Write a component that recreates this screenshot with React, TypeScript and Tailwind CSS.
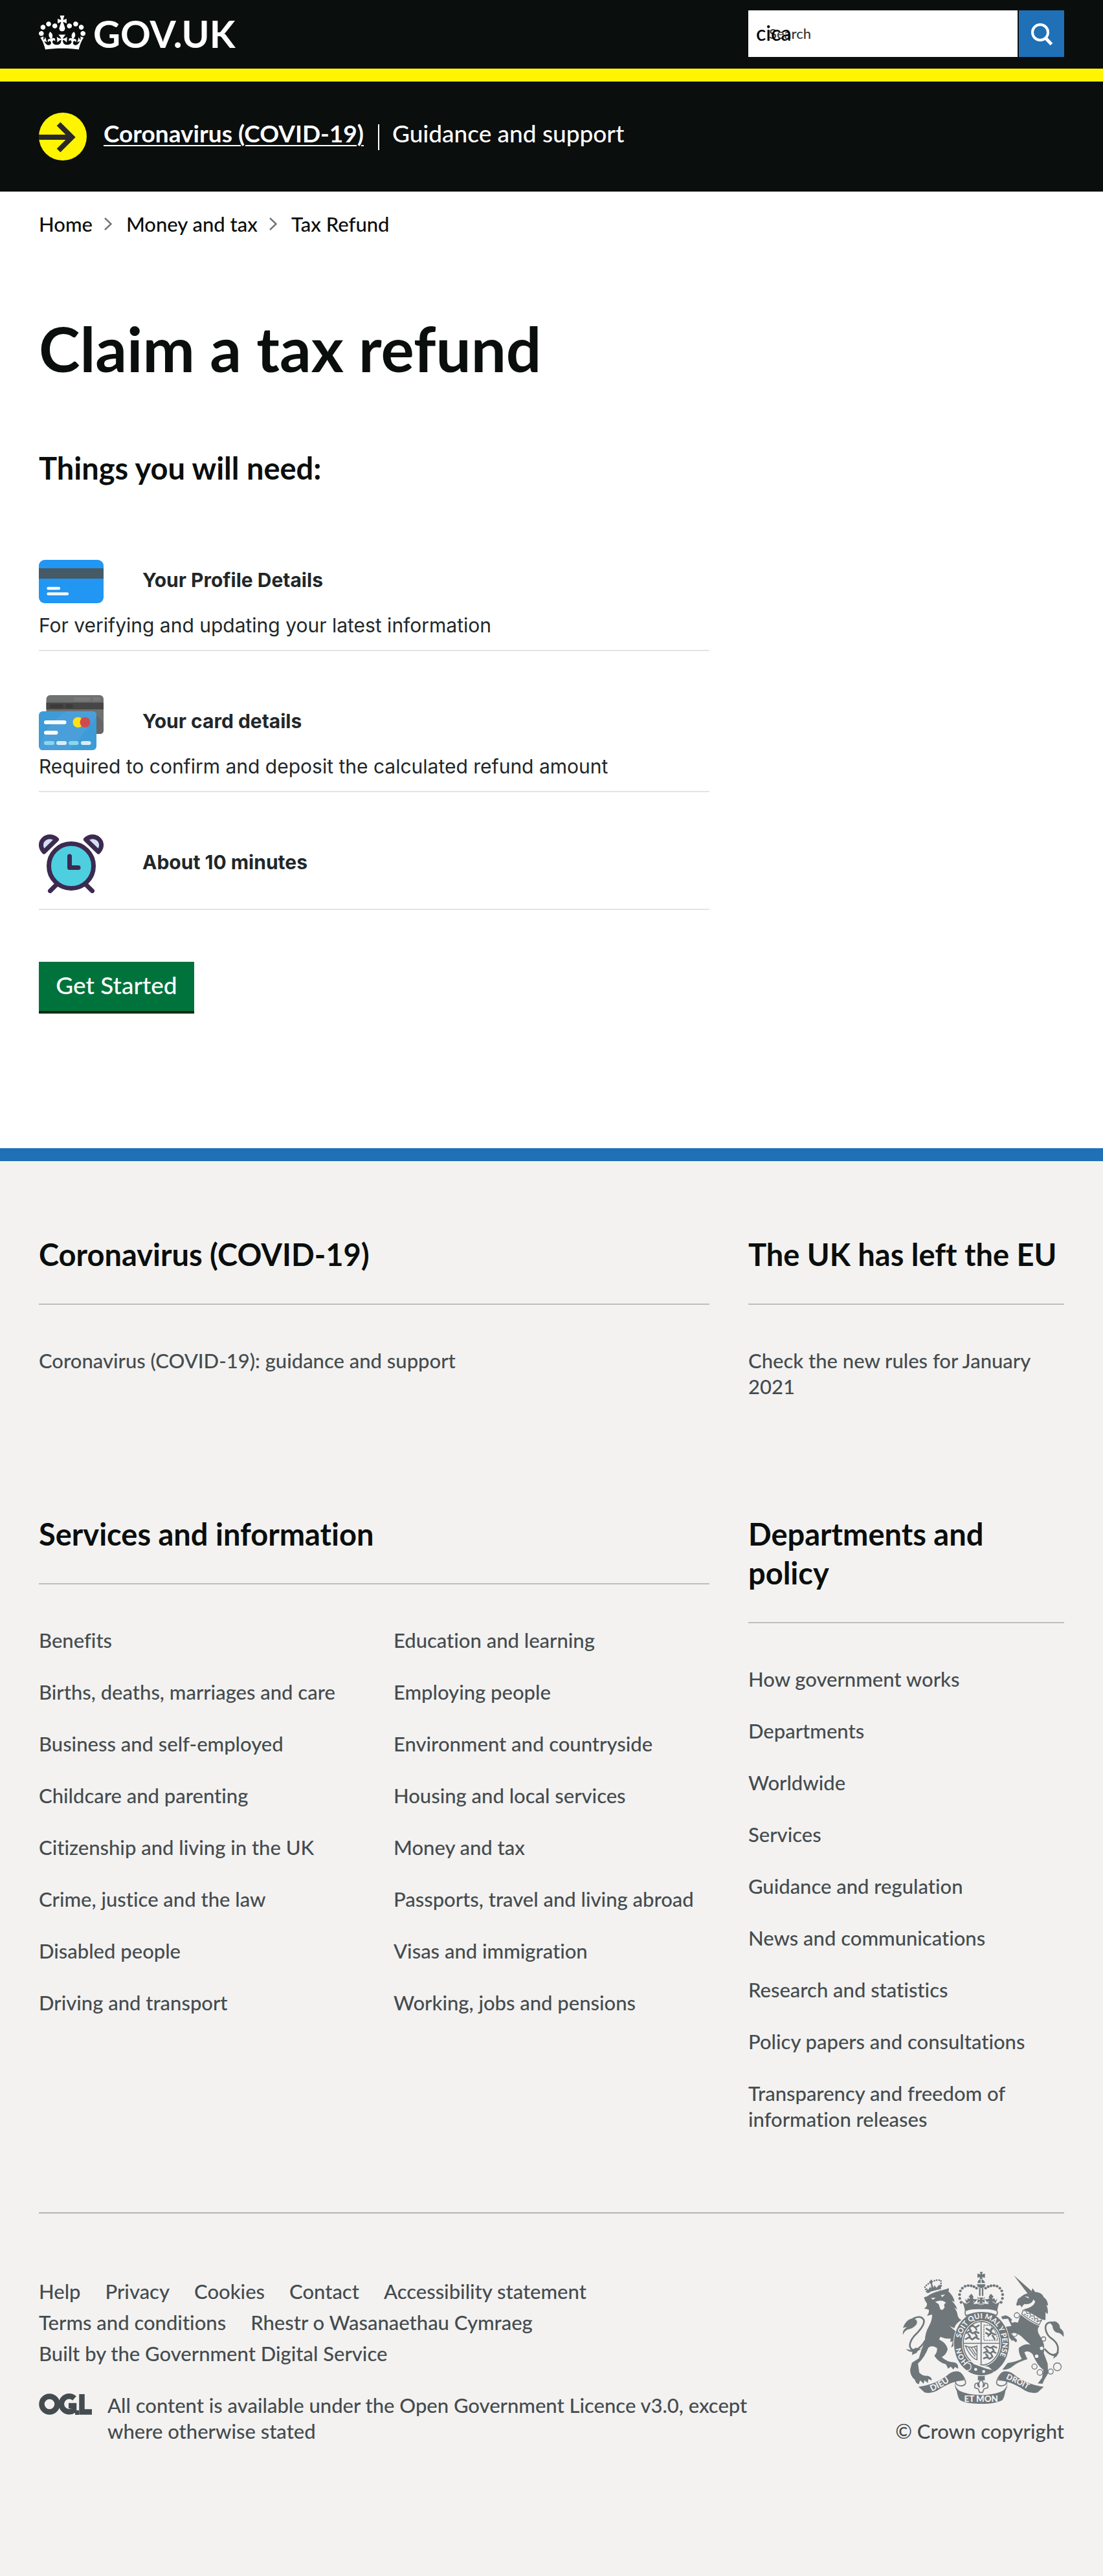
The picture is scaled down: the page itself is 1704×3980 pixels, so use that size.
import React from 'react';

const LATO = "font-['Lato','Liberation_Sans',sans-serif]";
const INTER = "font-['Inter','Liberation_Sans',sans-serif]";

function Crown() {
  return (
    <svg viewBox="0 0 132 97" className="h-[53px] w-[72px]" fill="#fff" aria-hidden="true">
      <path
        fillRule="evenodd"
        d="M25 30.2c3.5 1.5 7.7-.2 9.1-3.7 1.5-3.6-.2-7.8-3.9-9.2-3.6-1.4-7.6.3-9.1 3.9-1.4 3.5.3 7.5 3.9 9zM9 39.5c3.6 1.5 7.8-.2 9.2-3.7 1.5-3.6-.2-7.8-3.9-9.1-3.6-1.5-7.6.2-9.1 3.8-1.4 3.5.3 7.5 3.8 9zM4.4 57.2c3.5 1.5 7.7-.2 9.1-3.8 1.5-3.6-.2-7.7-3.9-9.1-3.5-1.5-7.6.3-9.1 3.8-1.4 3.5.3 7.6 3.9 9.1zm38.3-21.4c3.5 1.5 7.7-.2 9.1-3.8 1.5-3.6-.2-7.7-3.9-9.1-3.6-1.5-7.6.3-9.1 3.8-1.3 3.6.4 7.7 3.9 9.1zm64.4-5.6c-3.6 1.5-7.8-.2-9.1-3.7-1.5-3.6.2-7.8 3.8-9.2 3.6-1.4 7.7.3 9.2 3.9 1.3 3.5-.4 7.5-3.9 9zm15.9 9.3c-3.6 1.5-7.7-.2-9.1-3.7-1.5-3.6.2-7.8 3.7-9.1 3.6-1.5 7.7.2 9.2 3.8 1.5 3.5-.3 7.5-3.8 9zm4.7 17.7c-3.6 1.5-7.8-.2-9.2-3.8-1.5-3.6.2-7.7 3.9-9.1 3.6-1.5 7.7.3 9.2 3.8 1.3 3.5-.4 7.6-3.9 9.1zM89.3 35.8c-3.6 1.5-7.8-.2-9.2-3.8-1.4-3.6.2-7.7 3.9-9.1 3.6-1.5 7.7.3 9.2 3.8 1.4 3.6-.3 7.7-3.9 9.1zM69.7 17.7l8.9 4.7V9.3l-8.9 2.8c-.2-.3-.5-.6-.9-.9L72.4 0H59.6l3.5 11.2c-.3.3-.6.5-.9.9l-8.8-2.8v13.1l8.8-4.7c.3.3.6.7.9.9l-5 15.4v.1c-.2.8-.4 1.6-.4 2.4 0 4.1 3.1 7.5 7 8.1h.2c.3 0 .7.1 1 .1.4 0 .7 0 1-.1h.2c4-.6 7.1-4.1 7.1-8.1 0-.8-.1-1.7-.4-2.4V34l-5.1-15.4c.4-.2.7-.6 1-.9zM66 92.8c16.9 0 32.8 1.1 47.1 3.2 4-16.9 8.9-26.7 14-33.5l-9.6-3.4c1 4.9 1.1 7.2 0 10.2-1.5-1.4-3-4.3-4.2-8.7L108.6 76c2.8-2 5-3.2 7.5-3.3-4.4 9.4-10 11.9-13.6 11.2-4.3-.8-6.3-4.6-5.6-7.9 1-4.7 5.7-5.9 8-.5 4.3-8.7-3-11.4-7.6-8.8 7.1-7.2 7.9-13.5 2.1-21.1-8 6.1-8.1 12.3-4.5 20.8-4.7-5.4-12.1-2.5-9.5 6.2 3.4-5.2 7.9-2 7.2 3.1-.6 4.3-6.4 7.8-13.5 7.2-10.3-.9-10.9-8-11.2-13.8 2.5-.5 7.1 1.8 11 7.3L80.2 60c-4.1 4.4-8 5.3-12.3 5.4 1.4-4.4 8-11.6 8-11.6H55.5s6.4 7.2 7.9 11.6c-4.2-.1-8-1-12.3-5.4l1.4 16.4c3.9-5.5 8.5-7.7 10.9-7.3-.3 5.8-.9 12.8-11.1 13.8-7.2.6-12.9-2.9-13.5-7.2-.7-5 3.8-8.3 7.1-3.1 2.7-8.7-4.6-11.6-9.4-6.2 3.7-8.5 3.6-14.7-4.6-20.8-5.8 7.6-5 13.9 2.2 21.1-4.7-2.6-11.9.1-7.7 8.8 2.3-5.5 7.1-4.2 8.1.5.7 3.3-1.3 7.1-5.7 7.9-3.5.7-9-1.8-13.5-11.2 2.5.1 4.7 1.3 7.5 3.3l-4.7-15.4c-1.2 4.4-2.7 7.2-4.3 8.7-1.1-3-.9-5.3 0-10.2l-9.5 3.4c5 6.9 9.9 16.7 14 33.5 14.8-2.1 30.8-3.2 47.7-3.2z"
      />
    </svg>
  );
}

function ProfileCardIcon() {
  return (
    <svg viewBox="0 0 100 67" className="w-[100px] h-[67px]" aria-hidden="true">
      <rect width="100" height="67" rx="9" fill="#2196f3" />
      <rect y="13" width="100" height="16" fill="#455a64" />
      <path d="M14.5 44H31M14.5 52.5H44" stroke="#fafafa" strokeWidth="4.4" strokeLinecap="round" />
    </svg>
  );
}

function CardsIcon() {
  return (
    <svg viewBox="0 0 100 85" className="w-[100px] h-[85px]" aria-hidden="true">
      <rect x="11.5" width="88.5" height="60" rx="6" fill="#6f7170" />
      <path d="M89 30L100 42V54Q100 60 94 60H89z" fill="#656665" />
      <rect x="11.5" y="11.5" width="88.5" height="10.5" fill="#464646" />
      <rect x="54" y="3" width="26" height="6" rx="3" fill="#797979" />
      <rect x="83" y="3" width="12" height="6" rx="3" fill="#797979" />
      <rect x="17" y="14" width="21" height="6" rx="3" fill="#3b3b3b" />
      <rect x="41" y="14" width="12" height="6" rx="3" fill="#3b3b3b" />
      <rect y="25" width="89" height="60" rx="6" fill="#3d9bd7" />
      <path d="M42 25H83Q89 25 89 31V34L48 85H6Q2 85 1 81Q10 45 42 25z" fill="#4a9fda" />
      <g strokeWidth="6" strokeLinecap="round">
        <path d="M11 42H39.500M11 58H26.500" stroke="#fff" />
        <path d="M11 74H21M49 74H58.500" stroke="#8ad7ee" />
        <path d="M30 74H40M68 74H77.500" stroke="#d9edf6" />
      </g>
      <circle cx="60.5" cy="42" r="8" fill="#ffe313" />
      <circle cx="71.5" cy="42" r="8" fill="#d2494d" />
    </svg>
  );
}

function ClockIcon() {
  return (
    <svg viewBox="0 0 100 91" className="w-[100px] h-[91px]" aria-hidden="true">
      <g stroke="#3c2a51" strokeWidth="7" strokeLinecap="round" strokeLinejoin="round">
        <path d="M28 77L17.500 87.500M72 77L82.500 87.500" />
        <circle cx="50" cy="49" r="34.500" fill="#4ecfe0" />
        <path d="M47.500 34V51.500H61" fill="none" />
        <path d="M8 27C1.500 20 2.500 12 7.500 7.500C13 2.500 21 2.500 27.500 8z" fill="#d2e0f2" />
        <path d="M92 27C98.500 20 97.500 12 92.500 7.500C87 2.500 79 2.500 72.500 8z" fill="#d2e0f2" />
      </g>
    </svg>
  );
}

function OglLogo() {
  return (
    <svg viewBox="0 0 82 33" className="mt-[2px] h-[33px] w-[82px] shrink-0" fill="none" stroke="#454c4f" strokeWidth="8.500" aria-hidden="true">
      <circle cx="16.500" cy="16.500" r="12" />
      <path d="M55 7.500A12 12 0 1 0 54 26V19H46" />
      <path d="M59 26V33" strokeWidth="6" />
      <path d="M66.500 1V28.500H82" />
    </svg>
  );
}

const DOTS: [number, number][] = [
  [374, 230], [368, 212], [367, 194], [371, 177], [380, 164], [393, 155], [407, 152], [421, 153], [434, 157], [446, 164],
];

function HalfRibbon() {
  return (
    <g>
      <path d="M176 622Q262 610 318 562Q336 548 358 550Q386 556 388 592Q330 594 262 640Q232 656 204 648Q190 634 176 622z" fill="#6f777b" />
      <path d="M360 552Q386 566 394 596Q400 614 376 618Q350 616 348 600Q346 588 368 590" fill="none" stroke="#6f777b" strokeWidth="5" />
      <path d="M346 598Q344 624 366 640Q400 658 467 660V701Q400 702 368 684Q358 668 354 640Q342 622 346 598z" fill="#6f777b" />
    </g>
  );
}

function HalfCrown() {
  return (
    <g fill="#6f777b">
      {DOTS.map(([x, y]) => (
        <circle key={`${x}-${y}`} cx={x} cy={y} r="6.500" />
      ))}
      <path d="M375 218Q384 234 398 236Q398 222 390 212L402 222Q404 206 420 192L422 190Q436 206 434 216L450 214Q442 228 430 238L452 236L450 204L467 216V262Q430 260 392 268Q388 240 375 218z" />
      <path d="M398 236L414 226M430 226L452 236" stroke="#f3f2f1" strokeWidth="3" />
      <path d="M404 204L414 212M440 204L430 212" stroke="#f3f2f1" strokeWidth="6" />
    </g>
  );
}

function RoyalArms() {
  return (
    <svg viewBox="102 88 750 616" className="h-[205px] w-[250px]" role="img" aria-label="Royal coat of arms">
      <defs>
        <path id="garterTop" d="M374 396A97 116 0 1 1 538 502" />
        <path id="garterLeft" d="M408 510A97 116 0 0 1 373 436" />
        <path id="ribbonLeft" d="M238 644Q300 616 350 576" />
        <path id="ribbonRight" d="M582 584Q634 606 706 646" />
      </defs>

      {/* lion */}
      <g fill="#6f777b">
        <path d="M214 180L206 158Q220 142 236 136V124V136Q262 122 280 128L282 158" fill="none" stroke="#6f777b" strokeWidth="8" strokeLinecap="round" strokeDasharray="0.1 11" />
        <path d="M212 162L222 172L230 158L236 166L234 144L226 140L228 130L240 132L240 144L246 162L250 150L260 162L270 150L282 148L280 174Q246 176 218 188z" />
        <path d="M202 207L216 202Q236 186 278 176L318 164L316 180Q340 202 344 228L330 222Q352 244 356 262L342 254Q356 270 358 290Q362 306 376 312Q350 326 342 350L318 338L372 378Q366 400 382 438L368 452L356 436L346 452L344 428L328 440L336 410L324 414L326 398Q300 400 278 390L272 402Q308 420 312 448Q304 476 284 484Q310 508 340 508Q364 512 360 538L346 530L338 542L326 528L314 538L304 518Q268 508 250 478Q266 458 262 442Q240 426 222 440Q206 484 174 514L180 556Q198 574 216 570Q240 576 238 592L222 586L220 604L204 592L200 608L184 592L178 610Q162 606 160 590Q136 570 138 540L146 510L178 490Q188 450 206 410Q206 372 226 338Q240 312 240 286L216 292Q228 276 224 264L202 258Q216 252 216 236L206 220z" />
        <path d="M104 380Q100 358 124 344L104 348Q120 306 152 304Q178 312 166 334Q148 354 126 356Q112 362 104 380z" />
        <path d="M118 446Q148 456 162 440L190 448Q172 452 168 464L146 474L148 460Q130 460 118 446z" />
      </g>
      <path d="M150 306Q190 286 202 314Q204 336 174 368Q136 402 136 432Q142 458 168 448Q190 438 208 406" fill="none" stroke="#6f777b" strokeWidth="8" />
      <path d="M234 210L256 208L244 218zM280 196L300 194L286 206z" fill="#f3f2f1" />
      <path d="M254 228Q284 214 304 232Q290 238 298 252Q290 270 278 262L270 238z" fill="#f3f2f1" />
      <path d="M330 346L376 384M232 182Q270 170 306 166" stroke="#f3f2f1" strokeWidth="4" fill="none" />

      {/* unicorn */}
      <g fill="#6f777b">
        <path d="M618 104L704 180L684 190z" />
        <path d="M630 240L638 214L666 194L700 182L706 164L718 182Q748 182 758 206Q776 218 778 246L770 242Q780 262 776 284L766 276V312Q742 310 720 292L664 262Q712 252 718 226L710 216Q704 238 676 238Q664 234 656 254L648 242L634 246z" />
        <path d="M650 286Q690 320 738 340Q722 358 738 382Q768 424 758 466L776 514L778 560L760 590L752 608L730 606L750 580L756 544Q726 520 706 470Q684 450 668 462L682 494Q640 506 612 528Q592 544 566 542L590 512Q632 504 656 492Q640 468 642 442Q666 420 696 426Q670 404 652 386Q624 364 604 376L634 404L630 416L614 404L612 410L580 372L570 362L574 344L608 340L592 306L566 308L560 296L580 290Q604 296 616 320L638 324z" />
        <path d="M788 326Q810 306 830 334L834 350Q854 362 850 390Q836 370 816 370Q800 360 798 338z" />
        <path d="M776 470Q796 480 820 464L830 458L818 480L800 492L806 480z" />
      </g>
      <path d="M668 202L686 204L690 212z" fill="#f3f2f1" />
      <path d="M662 266L656 284Q690 312 736 334L748 312L732 318L728 304L716 306L712 292L698 294L694 280L680 282L676 270z" fill="#f3f2f1" stroke="#6f777b" strokeWidth="4" />
      <path d="M668 284L732 322" stroke="#6f777b" strokeWidth="5" strokeDasharray="7 6" />
      <path d="M806 324Q764 316 766 352Q770 384 800 402Q834 430 820 466Q796 488 762 446" fill="none" stroke="#6f777b" strokeWidth="8" />
      <g fill="none" stroke="#6f777b" strokeWidth="4">
        <circle cx="633" cy="290" r="12" />
        <circle cx="622" cy="375" r="13" />
        <circle cx="715" cy="528" r="12" />
        <circle cx="740" cy="555" r="13" />
        <circle cx="790" cy="551" r="12" />
        <circle cx="821" cy="529" r="18" />
      </g>
      <circle cx="757" cy="400" r="10" fill="#f3f2f1" stroke="#6f777b" strokeWidth="4" />
      <circle cx="748" cy="443" r="8" fill="#f3f2f1" />
      <circle cx="725" cy="480" r="8" fill="#f3f2f1" />
      <circle cx="614" cy="318" r="7" fill="#f3f2f1" />

      {/* garter and shield */}
      <ellipse cx="469" cy="420" rx="131" ry="152" fill="#f3f2f1" />
      <ellipse cx="469" cy="420" rx="128" ry="149" fill="#6f777b" />
      <ellipse cx="469" cy="420" rx="91" ry="107" fill="#f3f2f1" />
      <ellipse cx="469" cy="420" rx="85" ry="101" fill="none" stroke="#6f777b" strokeWidth="5" />
      <path d="M467 318V522M384 420H554" stroke="#6f777b" strokeWidth="5" />
      <g fill="none" stroke="#6f777b" strokeWidth="8" strokeLinecap="round">
        <path d="M414 345l14-8 12 10 16-10M400 372l14-8 14 10 14-8 14 6M396 400l16-8 14 10 14-10 16 8M412 350l8 12M440 345l6 12M408 378l8 10M440 376l8 12" />
        <path d="M482 440l14-6 14 8 14-8 14 6M480 464l14-6 14 8 14-8 12 6M480 490l14-6 12 8 12-8M490 446l8 10M520 444l6 10M490 470l8 10M514 470l6 12" />
        <path d="M492 352l16 10 14-12M500 386l14-16 18 10M516 350l-6 28M490 372l14 8M530 400l-10-16" />
      </g>
      <path d="M480 336H510Q536 354 544 406H480z" fill="none" stroke="#6f777b" strokeWidth="4" strokeDasharray="8 3" />
      <path d="M394 432Q420 444 448 432V496Q420 490 394 432zM408 438l32 44M422 440l22 34M436 438l10 20" fill="none" stroke="#6f777b" strokeWidth="4.500" />
      <path d="M398 506Q434 560 530 552L500 528Q470 530 428 500z" fill="#f3f2f1" />
      <path d="M402 546Q388 528 404 508Q424 500 432 516L486 536Q514 546 538 542Q500 572 454 566Q420 560 402 546z" fill="#6f777b" />
      <circle cx="442" cy="541" r="7" fill="#f3f2f1" />
      <circle cx="479" cy="551" r="7" fill="#f3f2f1" />
      <path d="M404 512Q422 512 420 534Q414 548 400 546" fill="none" stroke="#f3f2f1" strokeWidth="4" />
      <g fill="#f3f2f1" fontFamily="Lato, sans-serif" fontWeight="900" fontSize="34">
        <text><textPath href="#garterTop">SOIT QUI MAL Y PENSE</textPath></text>
        <text><textPath href="#garterLeft">HON</textPath></text>
      </g>

      {/* crown */}
      <path d="M462 88h12l-3 12 14-4v20l-14-4 4 10h-16l4-10-13 4V96l14 4z" fill="#6f777b" />
      <path d="M450 140Q452 124 465 123V140zM469 123Q484 126 485 140H469zM447 146H487Q486 164 467 164Q450 162 447 146z" fill="#6f777b" />
      <path d="M461 164V200M474 164V200" stroke="#6f777b" strokeWidth="7" />
      <path d="M395 268Q467 240 540 268Q546 280 538 290Q467 262 397 292Q390 280 395 268z" fill="#f3f2f1" stroke="#6f777b" strokeWidth="5" />
      <HalfCrown />
      <g transform="translate(934 0) scale(-1 1)">
        <HalfCrown />
      </g>
      <path d="M455 206h26l-8 12 12-6v22l-12-6 6 10h-24l6-10-12 6v-22l12 6z" fill="#6f777b" stroke="#f3f2f1" strokeWidth="3" />

      {/* motto ribbon */}
      <HalfRibbon />
      <g transform="translate(934 0) scale(-1 1)">
        <HalfRibbon />
      </g>
      <g fill="#f3f2f1" fontFamily="Lato, sans-serif" fontWeight="900" fontSize="40">
        <text><textPath href="#ribbonLeft">DIEU</textPath></text>
        <text fontSize="36"><textPath href="#ribbonRight">DROIT</textPath></text>
        <text x="467" y="693" textAnchor="middle">ET MON</text>
      </g>
      <path d="M452 572H484V592H452z" fill="#6f777b" />
      <path d="M467 588Q484 606 474 624Q486 616 484 604Q502 604 498 626L480 632L474 648H460L454 632L438 626Q434 604 452 604Q448 616 460 624Q450 606 467 588z" fill="#f3f2f1" stroke="#6f777b" strokeWidth="5" />
    </svg>
  );
}

function Chevron() {
  return (
    <svg viewBox="0 0 12 20" className="ml-[18px] mr-[22px] h-5 w-3" fill="none" stroke="#6f777b" strokeWidth="2.500" aria-hidden="true">
      <path d="M1 1L10.500 10L1 19" />
    </svg>
  );
}

function Section({ title, wide, children }: { title: string; wide?: boolean; children: React.ReactNode }) {
  return (
    <section className={wide ? 'w-2/3 px-[30px]' : 'w-1/3 px-[30px]'}>
      <h2 className="border-b-2 border-[#bbbfc2] pb-[46px] text-[47px] leading-[60px] font-bold text-[#0a0e0d]">{title}</h2>
      {children}
    </section>
  );
}

function LinkList({ items, columns }: { items: string[]; columns?: boolean }) {
  return (
    <ul className={columns ? 'mt-[66px] columns-2 gap-x-[60px]' : 'mt-[66px]'}>
      {items.map((item) => (
        <li key={item} className="break-inside-avoid pb-10 leading-10">
          <a href="#">{item}</a>
        </li>
      ))}
    </ul>
  );
}

const NEEDS = [
  { title: 'Your Profile Details', text: 'For verifying and updating your latest information', icon: <ProfileCardIcon /> },
  { title: 'Your card details', text: 'Required to confirm and deposit the calculated refund amount', icon: <CardsIcon /> },
  { title: 'About 10 minutes', text: '', icon: <ClockIcon /> },
];

const SERVICES = [
  'Benefits', 'Births, deaths, marriages and care', 'Business and self-employed', 'Childcare and parenting',
  'Citizenship and living in the UK', 'Crime, justice and the law', 'Disabled people', 'Driving and transport',
  'Education and learning', 'Employing people', 'Environment and countryside', 'Housing and local services',
  'Money and tax', 'Passports, travel and living abroad', 'Visas and immigration', 'Working, jobs and pensions',
];

const DEPARTMENTS = [
  'How government works', 'Departments', 'Worldwide', 'Services', 'Guidance and regulation', 'News and communications',
  'Research and statistics', 'Policy papers and consultations', 'Transparency and freedom of information releases',
];

const META = [
  'Help', 'Privacy', 'Cookies', 'Contact', 'Accessibility statement', 'Terms and conditions',
  'Rhestr o Wasanaethau Cymraeg', 'Built by the Government Digital Service',
];

export default function App() {
  return (
    <div className={`${LATO} bg-white text-[31px] leading-10 font-medium text-[#0a0e0d] [font-variant-ligatures:none]`}>
      <header className="border-b-[20px] border-[#fff500] bg-[#0a0e0d]">
        <div className="flex px-[30px] pt-4 pb-[18px]">
          <div className="flex w-2/3 items-center px-[30px]">
            <a href="#" className="flex items-center gap-3 text-white">
              <span className="pb-1"><Crown /></span>
              <span className="text-[58px] leading-[60px] font-bold">GOV.UK</span>
            </a>
          </div>
          <form className="flex w-1/3 gap-[2px] px-[30px]" role="search" onSubmit={(e) => e.preventDefault()}>
            <div className="relative h-[72px] min-w-0 flex-1 bg-white">
              <label htmlFor="site-search" className="absolute top-4 left-8 text-[22px] leading-10 text-[#33383a]">Search</label>
              <input id="site-search" type="text" defaultValue="cica" className="relative h-full w-full bg-transparent pb-1 pl-3 text-[32px] text-black" />
            </div>
            <button type="submit" aria-label="Search GOV.UK" className="flex h-[72px] w-[70px] items-center justify-center bg-[#2070b8]">
              <svg viewBox="0 0 36 36" className="size-9" fill="none" stroke="#fff" aria-hidden="true">
                <circle cx="16" cy="16" r="12" strokeWidth="4" />
                <path d="M24.500 25L33.500 34.500" strokeWidth="5" />
              </svg>
            </button>
          </form>
        </div>
      </header>

      <div className="bg-[#0a0e0d] px-[60px] py-12 text-[37px] leading-[50px] text-white">
        <div className="flex h-[74px] items-start">
          <svg viewBox="0 0 74 74" className="mr-[26px] size-[74px]" aria-hidden="true">
            <circle cx="37" cy="37" r="37" fill="#fff500" />
            <path d="M0 38H50M30.500 17.500L51 38L30.500 58.500" fill="none" stroke="#282828" strokeWidth="8" />
          </svg>
          <div className="flex items-center pt-[6px]">
            <a href="#" className="font-bold underline decoration-2 underline-offset-4">Coronavirus (COVID-19)</a>
            <span className="mt-3 ml-[22px] h-10 w-[2px] bg-white" />
            <span className="ml-5">Guidance and support</span>
          </div>
        </div>
      </div>

      <nav aria-label="Breadcrumb" className="flex items-center px-[60px] pt-[30px]">
        <a href="#">Home</a>
        <Chevron />
        <a href="#">Money and tax</a>
        <Chevron />
        <a href="#">Tax Refund</a>
      </nav>

      <main className="px-[30px] pb-[208px]">
        <div className="w-2/3 px-[30px]">
          <h1 className="pt-[122px] text-[96px] leading-[100px] font-bold">Claim a tax refund</h1>
          <h2 className="pt-[110px] pb-10 text-[47px] leading-[50px] font-bold">Things you will need:</h2>
          <ul className={`${INTER} text-[30px] leading-9 font-normal text-[#212729]`}>
            {NEEDS.map((need) => (
              <li key={need.title} className="border-b-2 border-[#e4e4e4] pt-[60px] pb-5">
                <div className="flex h-[100px] items-center gap-[60px]">
                  {need.icon}
                  <h3 className="pb-1 font-bold">{need.title}</h3>
                </div>
                {need.text && <p>{need.text}</p>}
              </li>
            ))}
          </ul>
          <button type="button" className="mt-20 flex h-20 w-60 items-center justify-center border-b-4 border-[#002d18] bg-[#00733c] pb-1 text-[37px] text-white">
            Get Started
          </button>
        </div>
      </main>

      <footer className="border-t-[20px] border-[#2070b8] bg-[#f3f2f1] px-[30px] pt-[114px] pb-[204px] text-[#454c4f]">
        <div className="flex pb-[138px]">
          <Section title="Coronavirus (COVID-19)" wide>
            <LinkList items={['Coronavirus (COVID-19): guidance and support']} />
          </Section>
          <Section title="The UK has left the EU">
            <LinkList items={['Check the new rules for January 2021']} />
          </Section>
        </div>
        <div className="flex">
          <Section title="Services and information" wide>
            <LinkList items={SERVICES} columns />
          </Section>
          <Section title="Departments and policy">
            <LinkList items={DEPARTMENTS} />
          </Section>
        </div>
        <div className="mx-[30px] mt-[84px] flex gap-52 border-t-2 border-[#b1b4b6] pt-[90px]">
          <div className="flex-1 pt-[6px]">
            <ul className="flex flex-wrap gap-x-[38px] leading-[48px]">
              {META.map((item) => (
                <li key={item}><a href="#">{item}</a></li>
              ))}
            </ul>
            <div className="mt-9 flex gap-6">
              <OglLogo />
              <a href="#">
                All content is available under the Open Government Licence v3.0, except where otherwise stated
              </a>
            </div>
          </div>
          <div className="flex w-[260px] flex-col items-end gap-[21px]">
            <RoyalArms />
            <a href="#" className="whitespace-nowrap">© Crown copyright</a>
          </div>
        </div>
      </footer>
    </div>
  );
}
